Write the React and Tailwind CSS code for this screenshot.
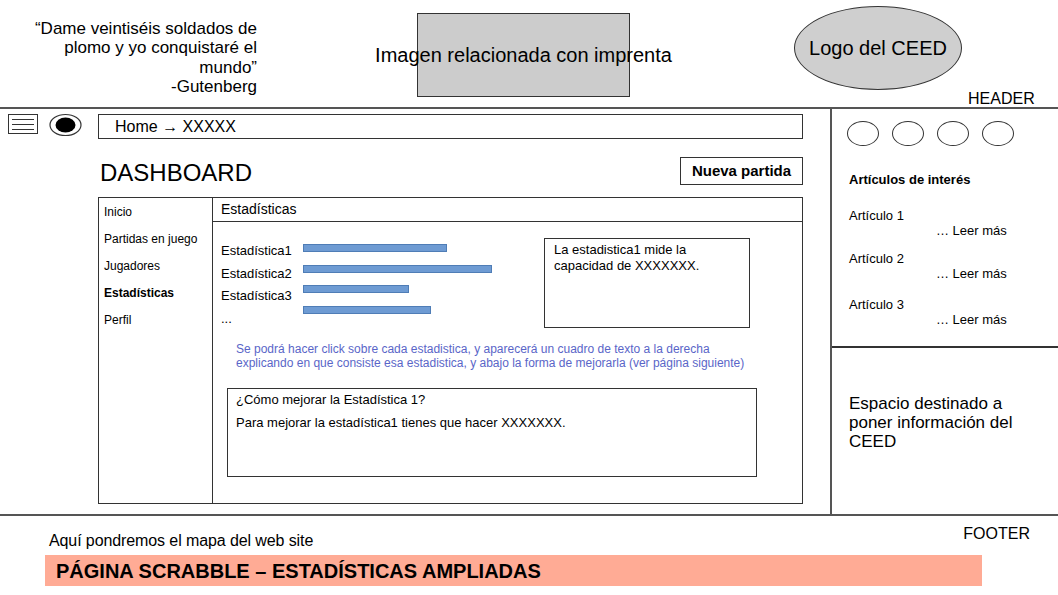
import React from "react";

const navItems = ["Inicio", "Partidas en juego", "Jugadores", "Estadísticas", "Perfil"];
const stats = ["Estadística1", "Estadística2", "Estadística3", "..."];
const bars = [144, 189, 106, 128];
const articles = ["Artículo 1", "Artículo 2", "Artículo 3"];

function MenuIcon() {
  return (
    <svg width="31" height="21" viewBox="0 0 31 21" className="block">
      <rect x="0.5" y="0.5" width="29" height="19" fill="white" stroke="#333" />
      <line x1="4" y1="5.5" x2="26" y2="5.5" stroke="#333" />
      <line x1="4" y1="10.5" x2="26" y2="10.5" stroke="#333" />
      <line x1="4" y1="15.5" x2="26" y2="15.5" stroke="#333" />
    </svg>
  );
}

function EyeIcon() {
  return (
    <svg width="33" height="24" viewBox="0 0 33 24" className="block">
      <ellipse cx="16.5" cy="12" rx="15.5" ry="10.5" fill="white" stroke="#333" strokeWidth="1.2" />
      <ellipse cx="16.5" cy="12" rx="10" ry="7.5" fill="#000" />
    </svg>
  );
}

export default function App() {
  return (
    <div className="w-[1058px] h-[595px] bg-white text-black overflow-hidden font-['Liberation_Sans',Arial,sans-serif]">
      {/* header */}
      <header className="h-[109px] flex border-b-2 border-[#555]">
        <div className="w-[257px] pt-[19px] text-right text-[17px] leading-[19.3px] whitespace-nowrap">
          <p>“Dame veintiséis soldados de</p>
          <p>plomo y yo conquistaré el</p>
          <p>mundo”</p>
          <p>-Gutenberg</p>
        </div>
        <div className="ml-[160px] mt-[13px] w-[213px] h-[84px] bg-[#cccccc] border border-[#333] flex items-center justify-center">
          <span className="whitespace-nowrap text-[20px]">Imagen relacionada con imprenta</span>
        </div>
        <div className="ml-[164px] mt-[6px] w-[168px] h-[84px] rounded-[50%] bg-[#cfcfcf] border border-[#333] flex items-center justify-center">
          <span className="text-[20px] whitespace-nowrap">Logo del CEED</span>
        </div>
        <div className="ml-[6px] self-end mb-[-1px] text-[16px] leading-[19px]">HEADER</div>
      </header>

      {/* body */}
      <div className="flex h-[407px] border-b-2 border-[#555]">
        <main className="w-[832px] border-r-2 border-[#555]">
          <div className="flex items-start pt-[4px]">
            <div className="ml-[8px] mt-[1px]"><MenuIcon /></div>
            <div className="ml-[10px]"><EyeIcon /></div>
            <div className="ml-[16px] mt-[1px] w-[705px] h-[25px] border border-[#333] pl-[16px] pt-[1px] flex items-center text-[16px]">
              Home → XXXXX
            </div>
          </div>

          <div className="ml-[98px] w-[705px]">
            <div className="flex items-center justify-between mt-[18px] h-[28px]">
              <h1 className="text-[24px] leading-[28px] pl-[2px] pt-[3px]">DASHBOARD</h1>
              <button type="button" className="w-[123px] h-[28px] border border-[#333] text-[15px] font-bold">
                Nueva partida
              </button>
            </div>

            <div className="mt-[12px] h-[307px] border border-[#333] flex">
              <nav className="w-[114px] border-r border-[#333] pl-[5px] pt-[5px] text-[12px]">
                {navItems.map((item) => (
                  <div key={item} className={"h-[27px] leading-[18px] " + (item === "Estadísticas" ? "font-bold" : "")}>
                    {item}
                  </div>
                ))}
              </nav>
              <section className="flex-1">
                <div className="h-[24px] border-b border-[#333] pl-[8px] flex items-center text-[14px]">Estadísticas</div>
                <div className="flex pl-[8px] pt-[16px]">
                  <div className="w-[82px] pt-[2px] text-[13px] leading-[22.7px]">
                    {stats.map((s) => (
                      <div key={s}>{s}</div>
                    ))}
                  </div>
                  <div className="w-[241px] pt-[6px] flex flex-col gap-[12.5px]">
                    {bars.map((w, i) => (
                      <div key={i} className="h-[8px] bg-[#6e9bd3] border border-[#4f7db6]" style={{ width: w }} />
                    ))}
                  </div>
                  <div className="w-[206px] h-[90px] border border-[#333] px-[9px] pt-[3px] text-[13px] leading-[16px]">
                    La estadistica1 mide la capacidad de XXXXXXX.
                  </div>
                </div>
                <p className="pl-[23px] mt-[11px] text-[12px] leading-[14.5px] text-[#5a66c8] whitespace-nowrap">
                  Se podrá hacer click sobre cada estadistica, y aparecerá un cuadro de texto a la derecha
                  <br />
                  explicando en que consiste esa estadistica, y abajo la forma de mejorarla (ver página siguiente)
                </p>
                <div className="ml-[14px] mt-[17px] w-[530px] h-[89px] border border-[#333] pl-[8px] pt-[2px] text-[13px]">
                  <p className="leading-[18px]">¿Cómo mejorar la Estadística 1?</p>
                  <p className="leading-[18px] mt-[5px]">Para mejorar la estadística1 tienes que hacer XXXXXXX.</p>
                </div>
              </section>
            </div>
          </div>
        </main>

        <aside className="flex-1 flex flex-col">
          <div className="h-[239px] border-b-2 border-[#333] pl-[15px]">
            <div className="flex gap-[13px] mt-[12px]">
              {[0, 1, 2, 3].map((i) => (
                <div key={i} className="w-[32px] h-[25px] rounded-[50%] border border-[#333]" />
              ))}
            </div>
            <div className="pl-[2px] mt-[26px] text-[13px] font-bold leading-[16px]">Artículos de interés</div>
            <div className="pl-[2px] mt-[20px] text-[13px] leading-[16px]">
              {articles.map((a, i) => (
                <div key={a} className={i === 2 ? "mt-[15px]" : i === 1 ? "mt-[12px]" : ""}>
                  <div>{a}</div>
                  <div className="pl-[87px] mt-[-1px]">… Leer más</div>
                </div>
              ))}
            </div>
          </div>
          <div className="flex-1 pl-[17px] pt-[46px] text-[17px] leading-[19px]">
            Espacio destinado a
            <br />
            poner información del
            <br />
            CEED
          </div>
        </aside>
      </div>

      {/* footer */}
      <footer>
        <div className="flex justify-between pl-[49px] pr-[28px]">
          <p className="mt-[16px] text-[16px] leading-[18px] tracking-[-0.1px]">Aquí pondremos el mapa del web site</p>
          <p className="mt-[9px] text-[16px] leading-[18px]">FOOTER</p>
        </div>
        <div className="ml-[45px] mt-[5px] w-[937px] h-[31px] bg-[#ffab95] pl-[11px] flex items-center">
          <span className="text-[20px] font-bold">PÁGINA SCRABBLE – ESTADÍSTICAS AMPLIADAS</span>
        </div>
      </footer>
    </div>
  );
}
